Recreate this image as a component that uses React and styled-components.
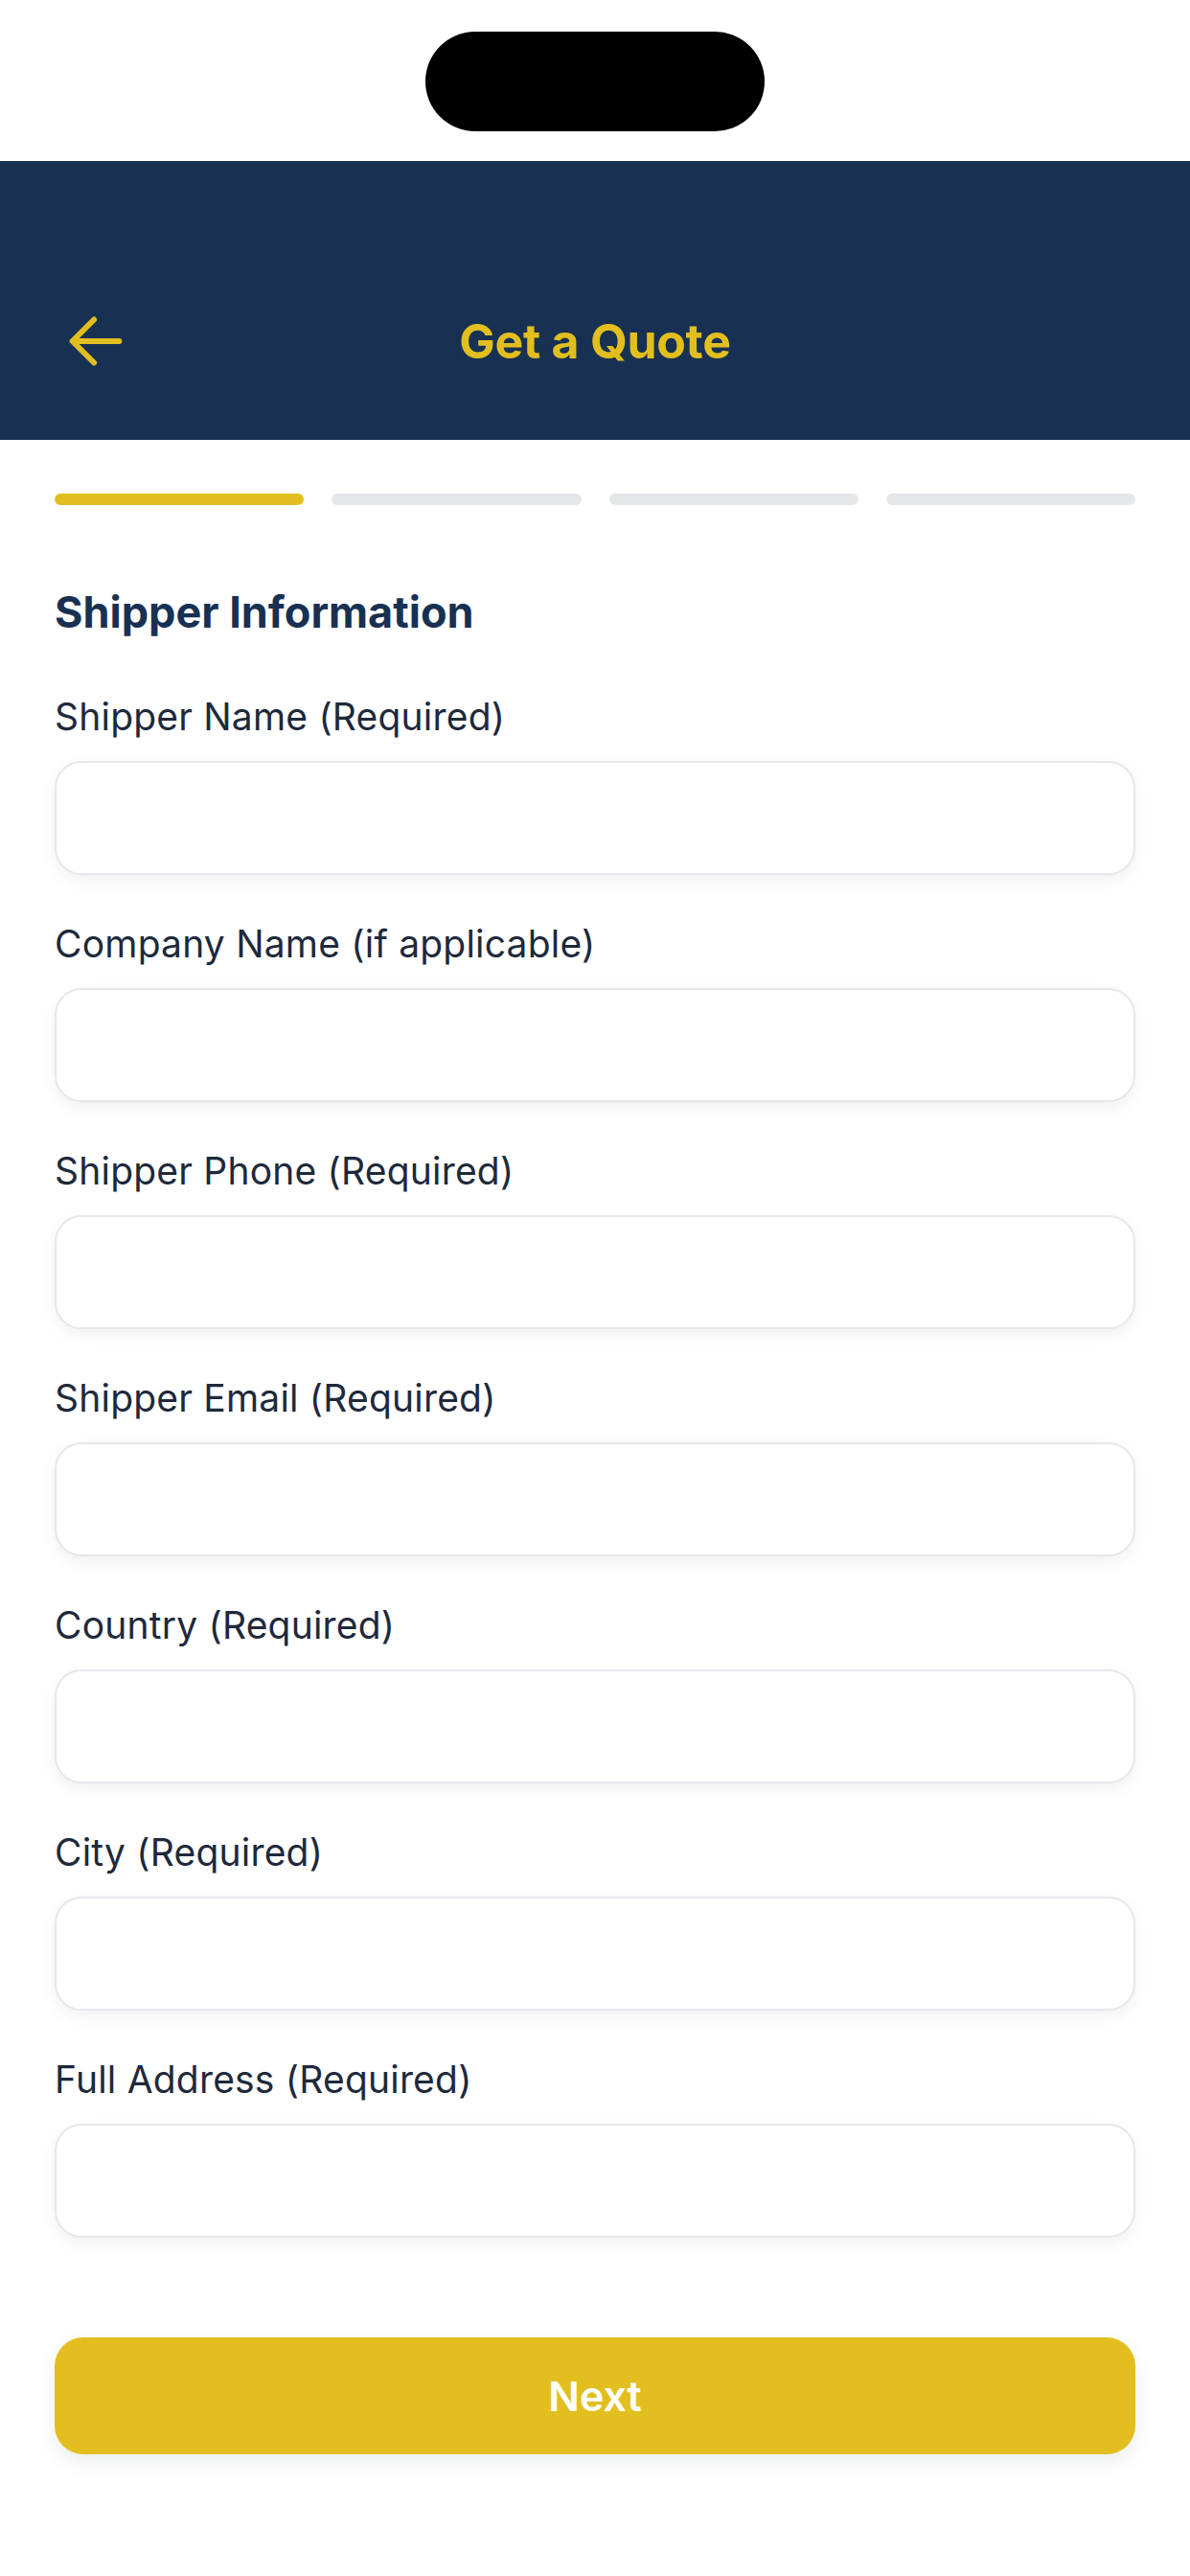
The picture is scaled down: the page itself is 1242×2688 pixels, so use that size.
import React from "react";
import styled, { createGlobalStyle } from "styled-components";

const GlobalStyle = createGlobalStyle`
  * { box-sizing: border-box; }
  html, body { margin: 0; padding: 0; background: #ffffff; }
  body { font-family: Inter, "Noto Sans", "Liberation Sans", sans-serif; }
`;

const Screen = styled.div`
  width: 1242px;
  min-height: 2688px;
  background: #ffffff;
  display: flex;
  flex-direction: column;
`;

const StatusArea = styled.div`
  height: 168px;
  display: flex;
  justify-content: center;
  padding-top: 33px;
`;

const Island = styled.div`
  width: 354px;
  height: 104px;
  border-radius: 52px;
  background: #000;
`;

const Header = styled.header`
  height: 291px;
  background: #183153;
  padding: 138px 57px 0;
`;

const HeaderRow = styled.div`
  height: 100px;
  display: grid;
  grid-template-columns: 120px 1fr 120px;
  align-items: center;
`;

const BackButton = styled.button`
  border: 0;
  background: transparent;
  padding: 0;
  margin-left: 3px;
  width: 80px;
  height: 80px;
  display: flex;
  align-items: center;
  justify-content: flex-start;
  cursor: pointer;
`;

const Title = styled.h1`
  margin: 0;
  text-align: center;
  font-size: 50px;
  font-weight: 700;
  letter-spacing: -0.3px;
  color: #e2bf1e;
`;

const Steps = styled.div`
  display: grid;
  grid-template-columns: repeat(4, 1fr);
  gap: 29px;
  padding: 56px 57px 0;
`;

const Step = styled.div`
  height: 12px;
  border-radius: 6px;
  background: ${(p) => (p.$active ? "#e2bf1e" : "#e5e6ea")};
`;

const Form = styled.form`
  padding: 83px 57px 0;
  display: flex;
  flex-direction: column;
`;

const SectionTitle = styled.h2`
  margin: 0 0 56px;
  font-size: 45px;
  line-height: 58px;
  font-weight: 700;
  color: #183153;
`;

const Field = styled.div`
  display: flex;
  flex-direction: column;
  gap: 23px;
  margin-bottom: 48px;
`;

const Label = styled.label`
  font-size: 39px;
  line-height: 47px;
  font-weight: 400;
  letter-spacing: 0.2px;
  color: #1e293b;
`;

const Input = styled.input`
  height: 119px;
  width: 100%;
  border: 2px solid #e6e7ec;
  border-radius: 28px;
  background: #ffffff;
  padding: 0 36px;
  font-size: 39px;
  font-family: inherit;
  box-shadow: 0 6px 16px rgba(15, 23, 42, 0.06);
  outline: none;
`;

const NextButton = styled.button`
  margin-top: 56px;
  height: 122px;
  width: 100%;
  border: 0;
  border-radius: 30px;
  background: #e2bf1e;
  color: #ffffff;
  font-family: inherit;
  font-size: 43px;
  font-weight: 600;
  box-shadow: 0 8px 20px rgba(15, 23, 42, 0.08);
  cursor: pointer;
`;

const fields = [
  "Shipper Name (Required)",
  "Company Name (if applicable)",
  "Shipper Phone (Required)",
  "Shipper Email (Required)",
  "Country (Required)",
  "City (Required)",
  "Full Address (Required)",
];

function BackArrow() {
  return (
    <svg width="80" height="80" viewBox="0 0 512 512" fill="none">
      <path
        d="M244 400L100 256l144-144M120 256h292"
        stroke="#e2bf1e"
        strokeWidth="38"
        strokeLinecap="round"
        strokeLinejoin="round"
      />
    </svg>
  );
}

export default function App() {
  return (
    <Screen>
      <GlobalStyle />
      <StatusArea>
        <Island />
      </StatusArea>
      <Header>
        <HeaderRow>
          <BackButton type="button" aria-label="Back">
            <BackArrow />
          </BackButton>
          <Title>Get a Quote</Title>
          <div />
        </HeaderRow>
      </Header>
      <Steps>
        <Step $active />
        <Step />
        <Step />
        <Step />
      </Steps>
      <Form onSubmit={(e) => e.preventDefault()}>
        <SectionTitle>Shipper Information</SectionTitle>
        {fields.map((f) => (
          <Field key={f}>
            <Label>{f}</Label>
            <Input type="text" />
          </Field>
        ))}
        <NextButton type="submit">Next</NextButton>
      </Form>
    </Screen>
  );
}
